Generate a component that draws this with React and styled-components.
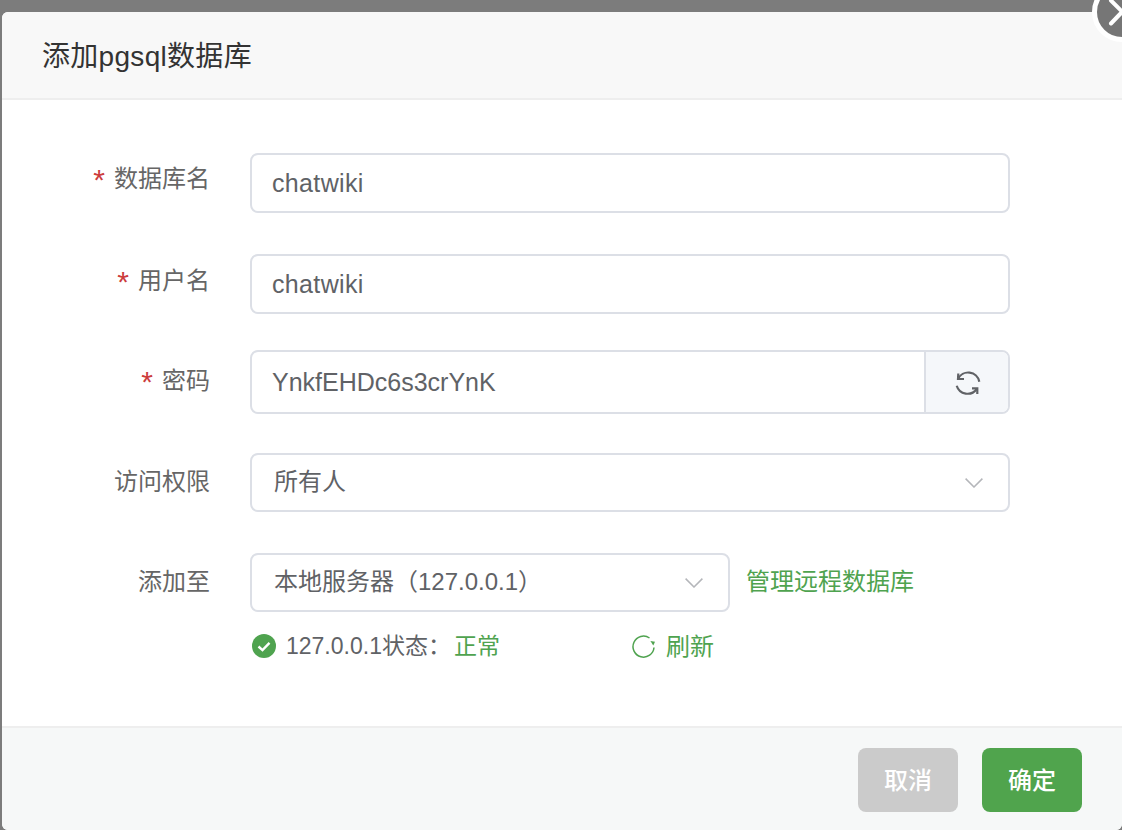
import React from 'react';
import styled, { createGlobalStyle } from 'styled-components';

const GlobalStyle = createGlobalStyle`
  html, body {
    margin: 0;
    height: 100%;
    overflow: hidden;
    background: #7c7c7c;
  }
  * {
    box-sizing: border-box;
  }
`;

const FONT = '"Liberation Sans", "Noto Sans CJK SC", sans-serif';
const GREEN = '#4fa34f';

const Page = styled.div`
  width: 1122px;
  height: 830px;
  padding: 12px 0 0 2px;
  overflow: hidden;
  position: relative;
  background: #7c7c7c;
  font-family: ${FONT};
`;

const Dialog = styled.div`
  width: 1120px;
  height: 818px;
  display: flex;
  flex-direction: column;
  background: #fff;
  border-radius: 6px;
  overflow: hidden;
`;

const Header = styled.div`
  height: 88px;
  flex: none;
  display: flex;
  align-items: center;
  padding: 0 0 3px 40px;
  background: #f8f8f8;
  border-bottom: 2px solid #eeeeee;
  color: #333;
  font-size: 28px;
  letter-spacing: 0.3px;
`;

const Close = styled.div`
  position: absolute;
  left: 1092px;
  top: -18px;
  width: 60px;
  height: 60px;
  border-radius: 50%;
  border: 5px solid #fff;
  background: #767676;
`;

const CloseMark = styled.svg`
  position: absolute;
  left: 1102px;
  top: -8px;
  width: 40px;
  height: 40px;
`;

const Form = styled.div`
  flex: 1;
  display: flex;
  flex-direction: column;
  padding-top: 53px;
`;

const Row = styled.div`
  display: flex;
  align-items: center;
  height: ${({ $h }) => $h}px;
  margin-bottom: ${({ $mb }) => $mb}px;
`;

const Label = styled.div`
  width: 208px;
  flex: none;
  margin-right: 40px;
  margin-bottom: ${({ $lift }) => $lift * 2}px;
  text-align: right;
  font-size: 24px;
  line-height: 32px;
  color: #666;
`;

const Star = styled.span`
  color: #cc3c3c;
  margin-right: 9px;
  font-size: 30px;
  line-height: 0;
  vertical-align: -3px;
`;

const Field = styled.div`
  width: ${({ $w }) => $w}px;
  height: 100%;
  flex: none;
  display: flex;
  align-items: stretch;
  border: 2px solid #dcdfe6;
  border-radius: 8px;
  background: #fff;
  overflow: hidden;
`;

const TextInput = styled.input`
  flex: 1;
  min-width: 0;
  border: 0;
  outline: 0;
  padding: 0 20px;
  background: transparent;
  font-family: ${FONT};
  font-size: 25px;
  letter-spacing: ${({ $tracking }) => $tracking || 0}px;
  color: #606266;
`;

const Addon = styled.div`
  width: 84px;
  flex: none;
  display: flex;
  align-items: center;
  justify-content: center;
  background: #f5f7fa;
  border-left: 2px solid #dcdfe6;
`;

const SelectBox = styled(Field)`
  align-items: center;
  justify-content: space-between;
  padding: 0 25px 0 22px;
  font-size: 24px;
  color: #606266;
`;

const SelectText = styled.span`
  margin-bottom: 6px;
`;

const ManageLink = styled.a`
  margin: 0 0 6px 16px;
  font-size: 24px;
  color: ${GREEN};
`;

const StatusRow = styled.div`
  display: flex;
  align-items: center;
  height: 32px;
  margin: 18px 0 0 250px;
  font-size: 23px;
  color: #606266;
`;

const StatusInfo = styled.div`
  width: 381px;
  flex: none;
  display: flex;
  align-items: center;
`;

const StatusText = styled.span`
  margin: 0 0 4px 10px;
`;

const StatusValue = styled.span`
  margin-left: 3px;
  color: ${GREEN};
`;

const Refresh = styled.a`
  display: flex;
  align-items: center;
  gap: 11px;
  font-size: 24px;
  color: ${GREEN};
`;

const RefreshText = styled.span`
  margin-bottom: 4px;
`;

const Footer = styled.div`
  height: 104px;
  flex: none;
  display: flex;
  justify-content: flex-end;
  gap: 24px;
  padding: 20px 40px 0 0;
  background: #f6f8f8;
  border-top: 2px solid #eeeeee;
`;

const Button = styled.button`
  width: 100px;
  height: 64px;
  padding: 0 0 4px;
  border: 0;
  border-radius: 8px;
  background: ${({ $primary }) => ($primary ? '#50a44d' : '#cbcbcb')};
  color: #fff;
  font-family: ${FONT};
  font-size: 24px;
  font-weight: 500;
`;

function Chevron() {
  return (
    <svg width="18" height="10" viewBox="0 0 18 10" fill="none">
      <path d="M.6.6L9 9l8.4-8.4" stroke="#b4b6ba" strokeWidth="1.5" />
    </svg>
  );
}

function SyncIcon() {
  return (
    <svg width="36" height="36" viewBox="0 0 36 36" fill="none" stroke="#606266" strokeWidth="2.2">
      <path d="M9 15A11.3 11.3 0 0 1 30.3 17.7" />
      <path d="M7.7 21.7A11.3 11.3 0 0 0 27.7 25" />
      <path d="M9.3 9.5L9 15L15 15" />
      <path d="M28.3 30V24.3H23" />
    </svg>
  );
}

function CheckIcon() {
  return (
    <svg width="24" height="24" viewBox="0 0 24 24">
      <circle cx="12" cy="12" r="12" fill={GREEN} />
      <path d="M6.5 12.5l4 3.6 7-7.2" fill="none" stroke="#fff" strokeWidth="2.4" />
    </svg>
  );
}

function RefreshIcon() {
  return (
    <svg width="22" height="22" viewBox="5 6 22 22" fill="none" overflow="visible">
      <path d="M26 18.5A10.5 10.5 0 1 1 21.5 9" stroke={GREEN} strokeWidth="1.5" />
      <path d="M22.4 12L27 12.8L25.3 16.4z" fill={GREEN} />
    </svg>
  );
}

export default function App() {
  return (
    <Page>
      <GlobalStyle />
      <Dialog>
        <Header>添加pgsql数据库</Header>
        <Form>
          <Row $h={60} $mb={41}>
            <Label $lift={4}><Star>*</Star>数据库名</Label>
            <Field $w={760}><TextInput readOnly value="chatwiki" $tracking={0.35} /></Field>
          </Row>
          <Row $h={60} $mb={36}>
            <Label $lift={3}><Star>*</Star>用户名</Label>
            <Field $w={760}><TextInput readOnly value="chatwiki" $tracking={0.35} /></Field>
          </Row>
          <Row $h={64} $mb={39}>
            <Label $lift={1}><Star>*</Star>密码</Label>
            <Field $w={760}>
              <TextInput readOnly value="YnkfEHDc6s3crYnK" />
              <Addon><SyncIcon /></Addon>
            </Field>
          </Row>
          <Row $h={59} $mb={41}>
            <Label $lift={1}>访问权限</Label>
            <SelectBox $w={760}><SelectText>所有人</SelectText><Chevron /></SelectBox>
          </Row>
          <Row $h={59} $mb={0}>
            <Label $lift={1}>添加至</Label>
            <SelectBox $w={480}><SelectText>本地服务器（127.0.0.1）</SelectText><Chevron /></SelectBox>
            <ManageLink>管理远程数据库</ManageLink>
          </Row>
          <StatusRow>
            <StatusInfo>
              <CheckIcon />
              <StatusText>127.0.0.1状态：<StatusValue>正常</StatusValue></StatusText>
            </StatusInfo>
            <Refresh><RefreshIcon /><RefreshText>刷新</RefreshText></Refresh>
          </StatusRow>
        </Form>
        <Footer>
          <Button>取消</Button>
          <Button $primary>确定</Button>
        </Footer>
      </Dialog>
      <Close />
      <CloseMark viewBox="0 0 40 40" fill="none">
        <path d="M9 8.5L32 31.5M31 8.5L9 31.5" stroke="#fff" strokeWidth="4" strokeLinecap="round" />
      </CloseMark>
    </Page>
  );
}
